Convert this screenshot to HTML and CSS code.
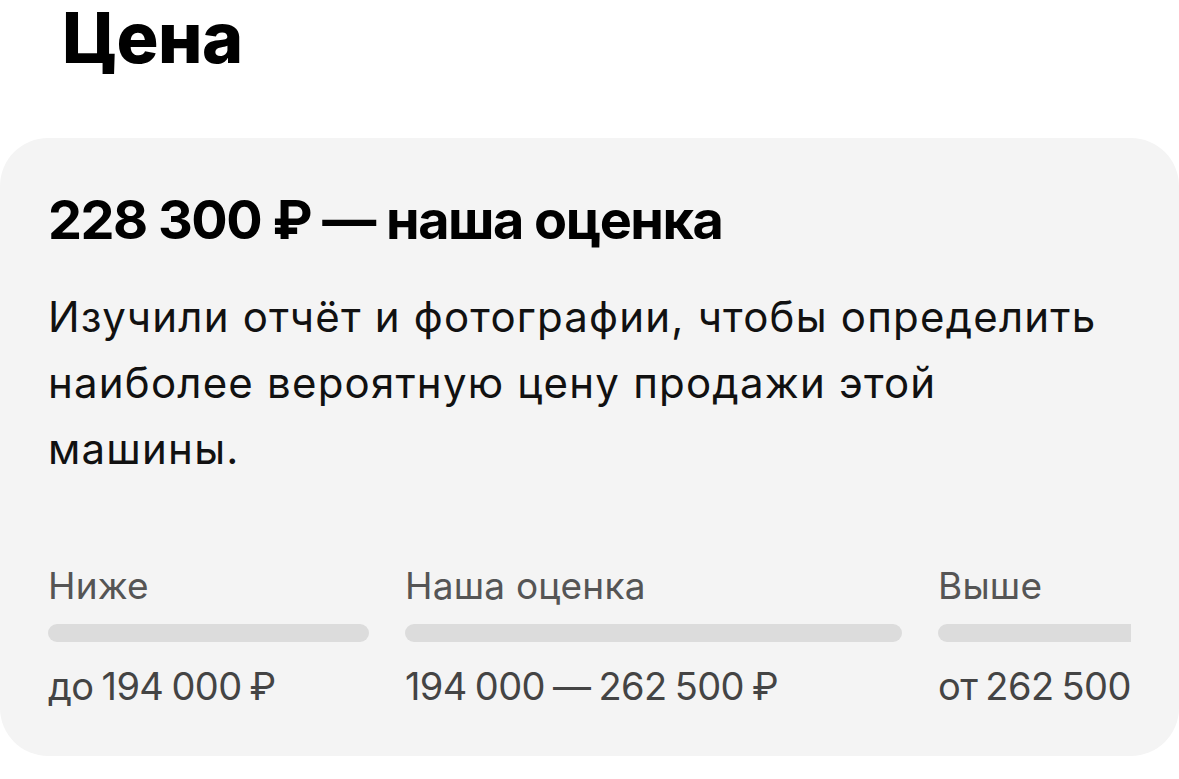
FILE: index.html
```html
<!DOCTYPE html>
<html lang="ru">
<head>
<meta charset="utf-8">
<title>Цена</title>
<link rel="stylesheet" href="styles.css">
</head>
<body>
<h1 class="page-title">Цена</h1>
<section class="price-card">
  <h2 class="price-card__title">228 300 ₽ — наша оценка</h2>
  <p class="price-card__text">Изучили отчёт и фотографии, чтобы определить наиболее вероятную цену продажи этой машины.</p>
  <div class="ranges">
    <div class="range range--low">
      <div class="range__label">Ниже</div>
      <div class="range__bar"></div>
      <div class="range__value">до 194 000 ₽</div>
    </div>
    <div class="range range--mid">
      <div class="range__label">Наша оценка</div>
      <div class="range__bar"></div>
      <div class="range__value">194 000 — 262 500 ₽</div>
    </div>
    <div class="range range--high">
      <div class="range__label">Выше</div>
      <div class="range__bar"></div>
      <div class="range__value">от 262 500 ₽</div>
    </div>
  </div>
</section>
</body>
</html>
```

FILE: styles.css
```css
* {
  box-sizing: border-box;
}

html, body {
  margin: 0;
  padding: 0;
  background: #ffffff;
}

body {
  width: 1179px;
  height: 779px;
  overflow: hidden;
  font-family: Inter, "Noto Sans", sans-serif;
  color: #111111;
}

.page-title {
  margin: 0;
  padding: 3px 0 0 62px;
  height: 138px;
  font-size: 70px;
  font-weight: 800;
  line-height: 70px;
  letter-spacing: -0.5px;
  color: #000000;
}

.price-card {
  background: #f4f4f4;
  border-radius: 48px;
  padding: 50px 48px 0 48px;
  height: 618px;
}

.price-card__title {
  margin: 0;
  font-size: 54px;
  font-weight: 700;
  line-height: 64px;
  letter-spacing: -1.5px;
  color: #000000;
}

.price-card__text {
  margin: 32px 0 0 0;
  font-size: 42px;
  font-weight: 400;
  line-height: 66px;
  letter-spacing: 1.2px;
  color: #111111;
}

.ranges {
  display: flex;
  gap: 36px;
  margin-top: 82px;
  overflow: hidden;
  width: 1083px;
}

.range {
  flex: none;
  display: flex;
  flex-direction: column;
}

.range--low { width: 321px; }
.range--mid { width: 497px; }
.range--high { width: 320px; }

.range__label {
  font-size: 37px;
  line-height: 44px;
  color: #555555;
  letter-spacing: 0.2px;
  white-space: nowrap;
}

.range__bar {
  height: 18px;
  border-radius: 9px;
  background: #dcdcdc;
  margin-top: 16px;
}

.range__value {
  margin-top: 22px;
  font-size: 38px;
  line-height: 44px;
  color: #444444;
  letter-spacing: -0.6px;
  word-spacing: -2px;
  white-space: nowrap;
}
```
